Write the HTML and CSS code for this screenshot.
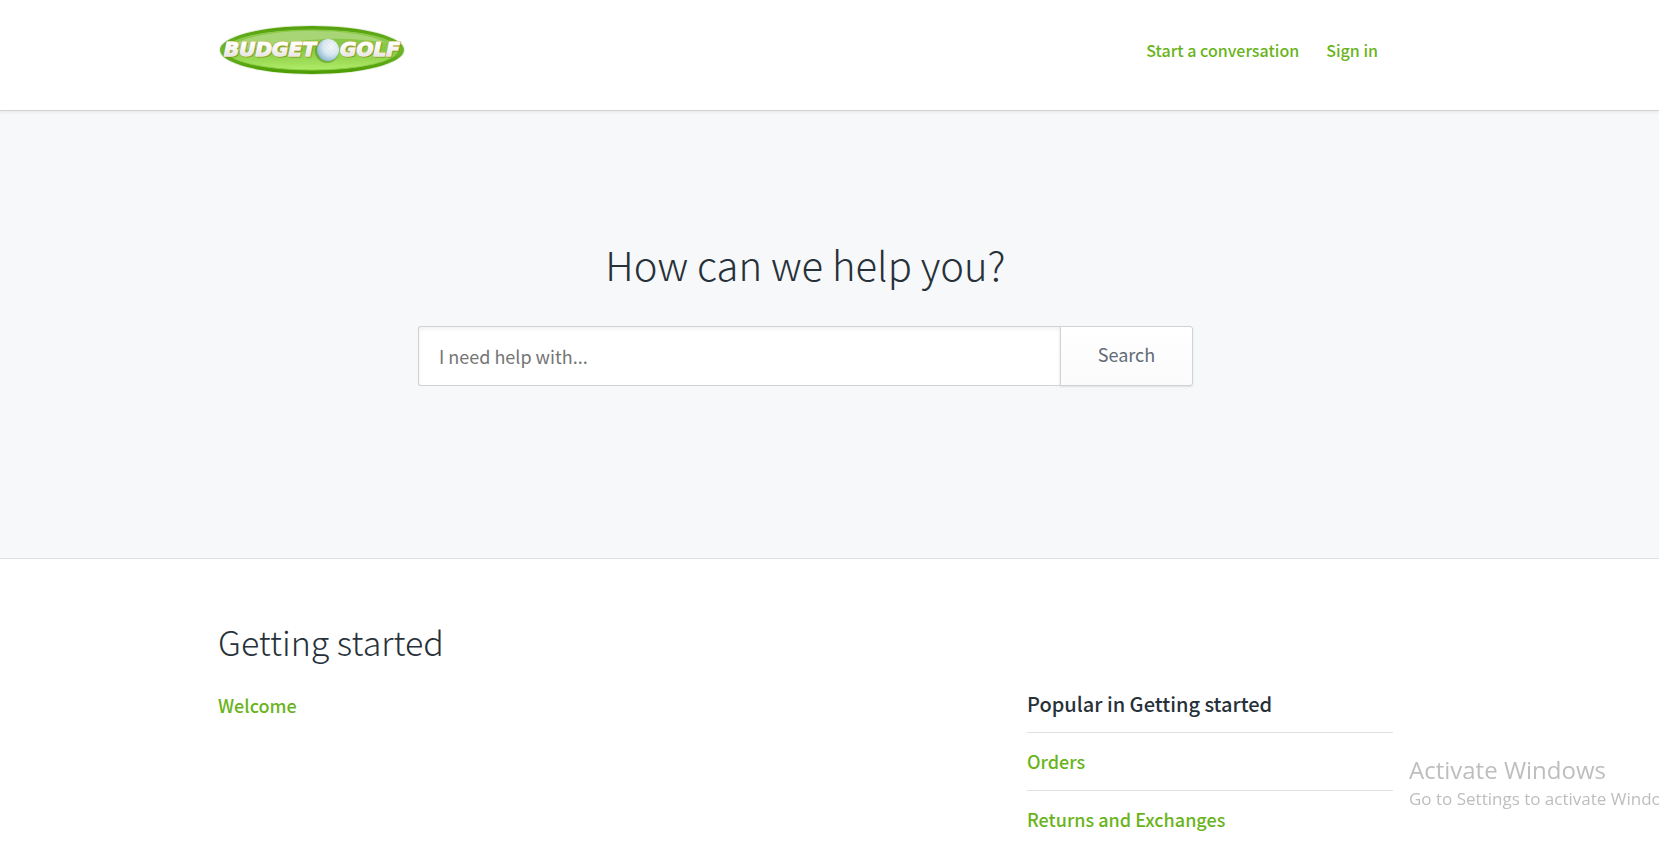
FILE: index.html
```html
<!DOCTYPE html>
<html lang="en">
<head>
    <meta charset="UTF-8">
    <title>Budget Golf Help Center</title>
    <link rel="stylesheet" href="styles.css">
</head>
<body>
<header class="header">
    <div class="container header_inner">
        <a class="logo" href="#" aria-label="Budget Golf">
            <svg width="188" height="52" viewBox="0 0 188 52">
                <defs>
                    <linearGradient id="rim" x1="0" y1="0" x2="0" y2="1">
                        <stop offset="0" stop-color="#55a00c"/>
                        <stop offset="0.5" stop-color="#6fb62a"/>
                        <stop offset="1" stop-color="#4c9c00"/>
                    </linearGradient>
                    <linearGradient id="face" x1="0" y1="0" x2="0" y2="1">
                        <stop offset="0" stop-color="#8cc650"/>
                        <stop offset="0.5" stop-color="#86c840"/>
                        <stop offset="1" stop-color="#b0ec68"/>
                    </linearGradient>
                    <linearGradient id="letters" x1="0" y1="0" x2="0" y2="1">
                        <stop offset="0.3" stop-color="#ffffff"/>
                        <stop offset="1" stop-color="#dcdcdc"/>
                    </linearGradient>
                    <radialGradient id="ball" cx="0.65" cy="0.35" r="0.75">
                        <stop offset="0" stop-color="#f4f8fa"/>
                        <stop offset="0.5" stop-color="#d8e8f0"/>
                        <stop offset="1" stop-color="#79afcb"/>
                    </radialGradient>
                    <pattern id="dimples" width="4" height="4" patternUnits="userSpaceOnUse">
                        <circle cx="1" cy="1" r="0.6" fill="#c3d7e0"/>
                        <circle cx="3" cy="3" r="0.6" fill="#c3d7e0"/>
                    </pattern>
                </defs>
                <ellipse cx="94" cy="26" rx="93" ry="25" fill="#e4efda"/>
                <ellipse cx="94" cy="26" rx="92" ry="24" fill="url(#rim)"/>
                <ellipse cx="94" cy="26" rx="86" ry="20" fill="url(#face)" stroke="#8fce4c" stroke-width="1"/>
                <path d="M20 18C40 10 64 7 94 7s56 3 76 12c-20-3-42-5-60-4C76 16 52 22 12 28c-4-3 0-7 8-10z" fill="#c5e39f" opacity="0.5"/>
                <circle cx="109" cy="27" r="12" fill="#477d18" opacity="0.45"/>
                <g class="logo_text">
                    <text class="logo_shadow" x="7" y="33">BUDGET</text>
                    <text class="logo_edge" x="6" y="32">BUDGET</text>
                    <text x="6" y="32">BUDGET</text>
                    <text class="logo_shadow" x="123" y="33">GOLF</text>
                    <text class="logo_edge" x="122" y="32">GOLF</text>
                    <text x="122" y="32">GOLF</text>
                </g>
                <circle cx="110" cy="26" r="11" fill="url(#ball)"/>
                <circle cx="110" cy="26" r="10" fill="url(#dimples)" opacity="0.6"/>
            </svg>
        </a>
        <nav class="nav">
            <a href="#">Start a conversation</a>
            <a href="#">Sign in</a>
        </nav>
    </div>
</header>
<section class="hero">
    <div class="container">
        <h1>How can we help you?</h1>
        <form class="search">
            <input class="search_input" type="text" placeholder="I need help with..." aria-label="Search">
            <button class="search_btn" type="submit">Search</button>
        </form>
    </div>
</section>
<main class="main">
    <div class="container">
        <h2>Getting started</h2>
        <div class="columns">
            <div class="topics">
                <a href="#">Welcome</a>
            </div>
            <aside class="popular">
                <h3>Popular in Getting started</h3>
                <ul>
                    <li><a href="#">Orders</a></li>
                    <li><a href="#">Returns and Exchanges</a></li>
                </ul>
            </aside>
        </div>
    </div>
</main>
<div class="activate">
    <p class="activate_title">Activate Windows</p>
    <p class="activate_text">Go to Settings to activate Windows.</p>
</div>
</body>
</html>
```

FILE: styles.css
```css
* {
    box-sizing: border-box;
}

body {
    margin: 0;
    background: #fff;
    color: #273139;
    font-family: "Noto Sans CJK SC", "Open Sans", sans-serif;
    font-size: 18px;
    line-height: 28px;
}

a {
    color: #69b41c;
    font-weight: 500;
    text-decoration: none;
}

h1, h2, h3, p, ul {
    margin: 0;
    padding: 0;
}

.header, .hero, .main {
    padding-right: 48px;
}

.container {
    max-width: 1175px;
    margin: 0 auto;
}

.header {
    position: relative;
    border-bottom: 1px solid #cfd3d6;
    box-shadow: 0 1px 4px rgba(0, 0, 0, 0.08);
}

.header_inner {
    display: flex;
    justify-content: space-between;
    align-items: flex-start;
    padding: 24px 15px 34px 0;
}

.logo {
    display: block;
    height: 52px;
}

.logo_text {
    font-family: "DejaVu Sans", sans-serif;
    font-size: 20px;
    font-weight: bold;
    font-style: italic;
    fill: url(#letters);
    stroke: #f2f2f2;
    stroke-width: 1px;
    paint-order: stroke;
}

.logo_edge {
    stroke: #c9b24a;
    stroke-width: 2px;
}

.logo_shadow {
    fill: #4f7f1c;
    stroke: #4f7f1c;
    opacity: 0.6;
}

.nav {
    display: flex;
    gap: 27px;
    padding-top: 12px;
    font-size: 16px;
    line-height: 28px;
}

.hero {
    padding-top: 123px;
    padding-bottom: 172px;
    border-bottom: 1px solid #dbe1e4;
    background: #f7f8fa;
}

h1 {
    font-size: 40px;
    font-weight: 300;
    line-height: 60px;
    text-align: center;
}

.search {
    display: flex;
    max-width: 775px;
    margin: 32px auto 0;
}

.search_input, .search_btn {
    height: 60px;
    border: 1px solid #cfd3d6;
    font-family: inherit;
    font-size: 18px;
}

.search_input {
    flex: 1;
    min-width: 0;
    padding: 0 20px;
    border-right: 0;
    border-radius: 3px 0 0 3px;
    background: #fff;
    box-shadow: inset 0 2px 4px rgba(0, 0, 0, 0.06);
}

.search_input::placeholder {
    color: #757575;
}

.search_btn {
    width: 133px;
    padding: 0 0 4px;
    border-radius: 0 3px 3px 0;
    background: linear-gradient(#fff, #fbfbfc);
    box-shadow: 0 1px 2px rgba(0, 0, 0, 0.1);
    color: #5f6b76;
}

.main {
    padding-top: 58px;
}

h2 {
    font-size: 34px;
    font-weight: 300;
    line-height: 50px;
}

.columns {
    display: grid;
    grid-template-columns: 1fr 366px;
    padding-top: 23px;
}

.topics {
    padding-top: 1px;
}

h3 {
    padding-bottom: 14px;
    font-size: 20px;
    font-weight: 500;
    line-height: 28px;
}

.popular ul {
    list-style: none;
}

.popular li {
    padding: 14px 0 15px;
    border-top: 1px solid #dbe1e4;
}

.popular li:last-child {
    padding-bottom: 0;
}

/* stays over the page in the lower right corner */
.activate {
    position: fixed;
    right: 0;
    bottom: 36px;
    width: 250px;
    overflow: hidden;
    color: #bebebe;
    font-family: "Open Sans", "Noto Sans", sans-serif;
    white-space: nowrap;
}

.activate_title {
    font-size: 24px;
    line-height: 34px;
}

.activate_text {
    font-size: 17px;
    line-height: 24px;
}
```
